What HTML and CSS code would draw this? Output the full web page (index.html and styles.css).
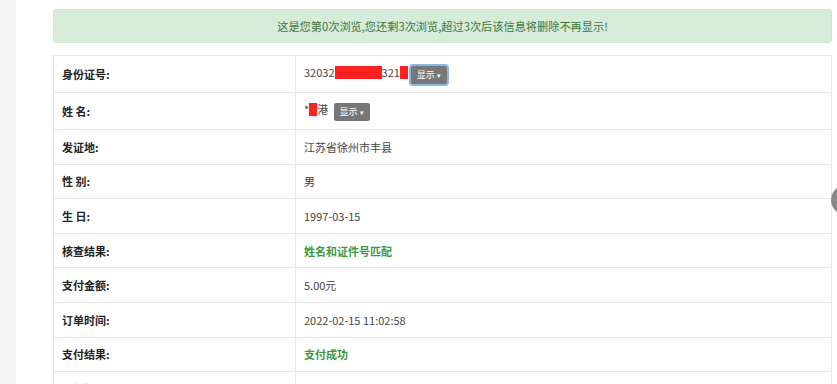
FILE: index.html
```html
<!DOCTYPE html>
<html lang="zh-CN">
<head>
<meta charset="utf-8">
<link rel="stylesheet" href="styles.css">
</head>
<body>
<div class="page">
  <aside class="side"></aside>
  <main class="main">
    <div class="alert">这是您第0次浏览,您还剩3次浏览,超过3次后该信息将删除不再显示!</div>
    <table class="info">
      <tr class="tall"><th>身份证号:</th><td>32032<span class="mask m1"></span>321<span class="mask m2"></span><button class="btn focus">显示 <span class="caret">▾</span></button></td></tr>
      <tr class="tall"><th>姓 名:</th><td>*<span class="mask m3"></span>港 <button class="btn">显示 <span class="caret">▾</span></button></td></tr>
      <tr><th>发证地:</th><td>江苏省徐州市丰县</td></tr>
      <tr><th>性 别:</th><td>男</td></tr>
      <tr><th>生 日:</th><td>1997-03-15</td></tr>
      <tr><th>核查结果:</th><td class="ok">姓名和证件号匹配</td></tr>
      <tr><th>支付金额:</th><td>5.00元</td></tr>
      <tr><th>订单时间:</th><td>2022-02-15 11:02:58</td></tr>
      <tr><th>支付结果:</th><td class="ok">支付成功</td></tr>
      <tr><th>温馨提示:</th><td>已去除身份证与姓名不匹配的信息</td></tr>
    </table>
  </main>
  <div class="float-btn"></div>
</div>
</body>
</html>
```
FILE: styles.css
```css
html, body {
  margin: 0;
  padding: 0;
  height: 100%;
  overflow: hidden;
  background: #fff;
  font-family: "Noto Sans CJK SC", "Noto Sans", sans-serif;
  font-size: 11px;
  color: #333;
}
.page {
  display: flex;
  height: 384px;
  position: relative;
}
.side {
  width: 16px;
  flex: none;
  background: #f3f3f3;
}
.main {
  flex: 1;
  padding: 9px 5px 0 37px;
}
.alert {
  height: 34px;
  box-sizing: border-box;
  background: #d6ecd9;
  border: 1px solid #cfe6d0;
  border-radius: 3px;
  color: #3c763d;
  text-align: center;
  line-height: 32px;
  font-size: 11.2px;
  margin-bottom: 12px;
}
.info {
  width: 100%;
  border-collapse: collapse;
  border: 1px solid #e2e2e2;
}
.info th, .info td {
  border: 1px solid #e6e6e6;
  padding: 0 8px;
  height: 33.6px;
  text-align: left;
  vertical-align: middle;
  white-space: nowrap;
}
.info tr.tall th, .info tr.tall td {
  height: 36px;
}
.info th {
  width: 225px;
  font-weight: bold;
  color: #222;
}
.info td {
  color: #444;
}
.info td.ok {
  color: #3c9a3c;
  font-weight: bold;
}
.mask {
  display: inline-block;
  background: #ff2020;
  height: 13px;
  vertical-align: -2px;
}
.m1 { width: 47px; }
.m2 { width: 8px; }
.m3 { width: 8px; }
.btn {
  display: inline-block;
  background: #777;
  color: #fff;
  border: none;
  border-radius: 2px;
  font-family: inherit;
  font-size: 9px;
  height: 18px;
  padding: 0 6px;
  margin-left: 3px;
  line-height: 18px;
  vertical-align: middle;
}
.btn .caret {
  font-size: 7px;
}
.btn.focus {
  box-shadow: 0 0 0 2px #8fb4e8;
}
.float-btn {
  position: absolute;
  left: 831px;
  top: 185px;
  width: 30px;
  height: 30px;
  border-radius: 50%;
  background: #8a8a8a;
}
```
